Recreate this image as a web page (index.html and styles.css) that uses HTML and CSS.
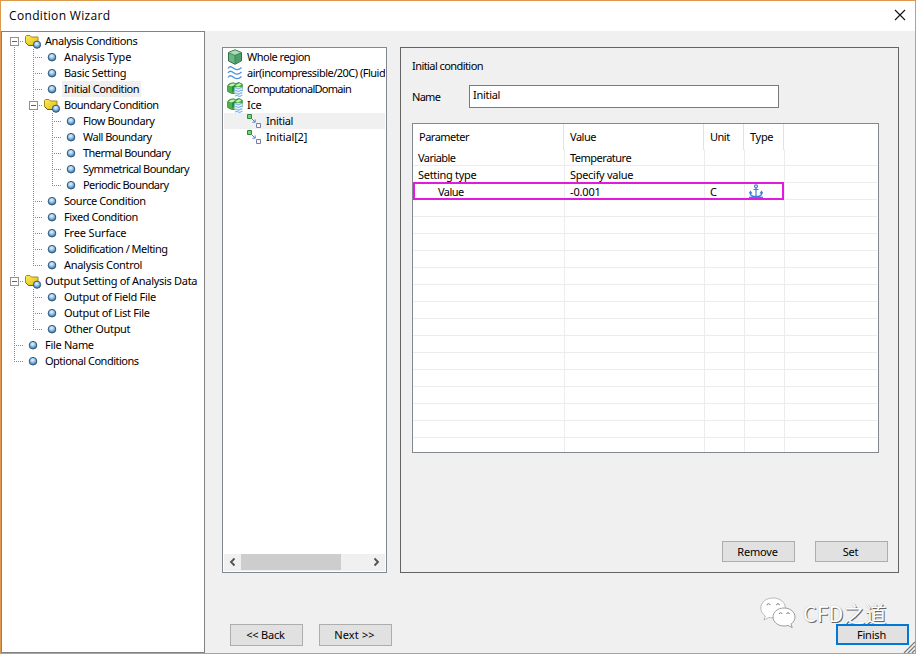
FILE: index.html
```html
<!DOCTYPE html>
<html lang="en">
<head>
<meta charset="utf-8">
<title>Condition Wizard</title>
<link rel="stylesheet" href="styles.css">
</head>
<body>
<svg class="defs" width="0" height="0" aria-hidden="true">
  <defs>
    <radialGradient id="ball" cx="45%" cy="35%" r="62%"><stop offset="0" stop-color="#e4f6ff"/><stop offset=".4" stop-color="#a3d0ee"/><stop offset="1" stop-color="#3a71a8"/></radialGradient>
    <linearGradient id="gold" x1="0" y1="0" x2="1" y2="1"><stop offset="0" stop-color="#fbec5a"/><stop offset="1" stop-color="#e3bd14"/></linearGradient>
    <symbol id="dot" viewBox="0 0 19 16"><circle cx="9" cy="8.200" r="3.800" fill="url(#ball)" stroke="#34567f" stroke-width="1"/></symbol>
    <symbol id="folder" viewBox="0 0 19 16"><path d="M1.500 3.500 2.500 2.500h3.500l1.500 1.500h6.500v8.500H4.500L1.500 9.500z" fill="url(#gold)" stroke="#a38820" stroke-width="1"/><path d="M1.500 9.500l3 3h6" stroke="#6c5a1c" fill="none"/><circle cx="13" cy="11.700" r="3.600" fill="url(#ball)" stroke="#34567f"/></symbol>
    <symbol id="cube" viewBox="0 0 16 16"><path d="M8 .8 14.500 3.500v8.300L8 15.300 1.500 12V3.500z" fill="#6cb585" stroke="#2f6f43"/><path d="M8 1.300 14 3.800 8 6.400 2 3.800z" fill="#a5deb4"/><path d="M8 6.400v8.300l6-3.200V3.800z" fill="#4f9d6a"/><path d="M2 3.900 8 6.400l6-2.500M8 6.400v8.400" fill="none" stroke="#2e7545" stroke-width=".7"/></symbol>
    <symbol id="waves" viewBox="0 0 16 16"><g fill="none" stroke="#4b93e2" stroke-width="1.300"><path d="M1 3.500c2-3 4-1.500 6 0s4.500 2 7.500-1M1 8c2-3 4-1.500 6 0s4.500 2 7.500-1M1 12.500c2-3 4-1.500 6 0s4.500 2 7.500-1"/></g></symbol>
    <symbol id="domain" viewBox="0 0 16 16"><path d="M.6 4.500 3 2.400 6.500 1.800l2 .8L12 1.500l3.300 1.700V10L11 12.500 5 12.500 .6 10.500z" fill="#4fb048" stroke="#2b8733" stroke-width=".8"/><path d="M1.600 4.600 4 2.900l3-.3 1 .8-2.500 2zM8.500 4.200l4-1.900 2 1.300-3.500 1.800z" fill="#c6f0ba"/><path d="M5 5.500 8 3.900v4L5 11.500z" fill="#2a8a38"/><path d="M7.500 6.200h8v9.300h-8z" fill="#eaf5ff"/><g fill="none" stroke="#5a9ce6" stroke-width="1"><path d="M7 7.800c2-2 2.700 0 4.300 0s2-1.500 4-1M7 10.400c2-2 2.700 0 4.300 0s2-1.500 4-1M7 13c2-2 2.700 0 4.300 0s2-1.500 4-1M8 15.300c2-2 2.700 0 4.300 0s1.500-.8 3-1"/></g></symbol>
    <symbol id="link" viewBox="0 0 16 16"><path d="M1.500 1.500h4v4h-4z" fill="#79d17b" stroke="#278b35"/><path d="M10.500 10.500h4v4h-4z" fill="#f4f6fb" stroke="#76819d"/><path d="m6 6 3 3M9.200 6.500v2.700H6.500" fill="none" stroke="#4c86d4"/></symbol>
  </defs>
</svg>

<div class="window">
  <header class="titlebar">
    <h1>Condition Wizard</h1>
    <svg class="close" viewBox="0 0 12 12"><path d="m1 1 10 10M11 1 1 11"/></svg>
  </header>

  <main class="content">
    <nav class="tree">
      <div class="node"><i class="g first box"></i><svg><use href="#folder"/></svg><span class="t k2">Analysis Conditions</span></div>
      <div class="node"><i class="g v"></i><i class="g v h"></i><svg><use href="#dot"/></svg><span class="t k0">Analysis Type</span></div>
      <div class="node"><i class="g v"></i><i class="g v h"></i><svg><use href="#dot"/></svg><span class="t">Basic Setting</span></div>
      <div class="node"><i class="g v"></i><i class="g v h"></i><svg><use href="#dot"/></svg><span class="t k2 current">Initial Condition</span></div>
      <div class="node"><i class="g v"></i><i class="g v h box"></i><svg><use href="#folder"/></svg><span class="t k3">Boundary Condition</span></div>
      <div class="node"><i class="g v"></i><i class="g v"></i><i class="g v h"></i><svg><use href="#dot"/></svg><span class="t k2">Flow Boundary</span></div>
      <div class="node"><i class="g v"></i><i class="g v"></i><i class="g v h"></i><svg><use href="#dot"/></svg><span class="t k3">Wall Boundary</span></div>
      <div class="node"><i class="g v"></i><i class="g v"></i><i class="g v h"></i><svg><use href="#dot"/></svg><span class="t k4">Thermal Boundary</span></div>
      <div class="node"><i class="g v"></i><i class="g v"></i><i class="g v h"></i><svg><use href="#dot"/></svg><span class="t k4">Symmetrical Boundary</span></div>
      <div class="node"><i class="g v"></i><i class="g v"></i><i class="g last h"></i><svg><use href="#dot"/></svg><span class="t k4">Periodic Boundary</span></div>
      <div class="node"><i class="g v"></i><i class="g v h"></i><svg><use href="#dot"/></svg><span class="t k2">Source Condition</span></div>
      <div class="node"><i class="g v"></i><i class="g v h"></i><svg><use href="#dot"/></svg><span class="t k2">Fixed Condition</span></div>
      <div class="node"><i class="g v"></i><i class="g v h"></i><svg><use href="#dot"/></svg><span class="t k0">Free Surface</span></div>
      <div class="node"><i class="g v"></i><i class="g v h"></i><svg><use href="#dot"/></svg><span class="t k3">Solidification / Melting</span></div>
      <div class="node"><i class="g v"></i><i class="g last h"></i><svg><use href="#dot"/></svg><span class="t">Analysis Control</span></div>
      <div class="node"><i class="g v h box"></i><svg><use href="#folder"/></svg><span class="t">Output Setting of Analysis Data</span></div>
      <div class="node"><i class="g v"></i><i class="g v h"></i><svg><use href="#dot"/></svg><span class="t">Output of Field File</span></div>
      <div class="node"><i class="g v"></i><i class="g v h"></i><svg><use href="#dot"/></svg><span class="t">Output of List File</span></div>
      <div class="node"><i class="g v"></i><i class="g last h"></i><svg><use href="#dot"/></svg><span class="t">Other Output</span></div>
      <div class="node"><i class="g v h"></i><svg><use href="#dot"/></svg><span class="t">File Name</span></div>
      <div class="node"><i class="g last h"></i><svg><use href="#dot"/></svg><span class="t k3">Optional Conditions</span></div>
    </nav>

    <div class="page">
      <div class="panels">
        <section class="regions">
          <div class="region-list">
            <div class="region"><svg><use href="#cube"/></svg><span class="k3">Whole region</span></div>
            <div class="region"><svg><use href="#waves"/></svg><span class="k3">air(incompressible/20C) (Fluid)</span></div>
            <div class="region"><svg><use href="#domain"/></svg><span class="k5">ComputationalDomain</span></div>
            <div class="region"><svg><use href="#domain"/></svg><span>Ice</span></div>
            <div class="region child selected"><svg><use href="#link"/></svg><span>Initial</span></div>
            <div class="region child"><svg><use href="#link"/></svg><span class="k0">Initial[2]</span></div>
          </div>
          <div class="scrollbar">
            <svg viewBox="0 0 17 16"><path d="M10.500 4.500 7 8l3.500 3.500"/></svg>
            <div class="track"><div class="thumb"></div></div>
            <svg viewBox="0 0 17 16"><path d="M6.500 4.500 10 8l-3.500 3.500"/></svg>
          </div>
        </section>

        <section class="settings">
          <h2 class="k4">Initial condition</h2>
          <div class="field"><label class="k5">Name</label><div class="input">Initial</div></div>
          <div class="grid">
            <div class="row head"><span class="k3">Parameter</span><span class="k3">Value</span><span class="k3">Unit</span><span>Type</span></div>
            <div class="row"><span class="k4">Variable</span><span class="k3">Temperature</span><span></span><span></span></div>
            <div class="row"><span>Setting type</span><span>Specify value</span><span></span><span></span></div>
            <div class="row marked"><span class="sub k4">Value</span><span class="k0">-0.001</span><span>C</span><span><svg class="anchor" viewBox="0 0 14 14"><circle cx="7" cy="2.300" r="1.500"/><path d="M7 4v9M4.500 5.500h5M1.500 7.500v3.200c1 1.500 3 2 5.500 2s4.500-.5 5.500-2V7.500M.3 9.500l1.200-2 1.500 2M11 9.500l1.500-2 1.200 2M0 13.400h14"/></svg></span></div>
            <div class="row"><span></span><span></span><span></span><span></span></div>
            <div class="row"><span></span><span></span><span></span><span></span></div>
            <div class="row"><span></span><span></span><span></span><span></span></div>
            <div class="row"><span></span><span></span><span></span><span></span></div>
            <div class="row"><span></span><span></span><span></span><span></span></div>
            <div class="row"><span></span><span></span><span></span><span></span></div>
            <div class="row"><span></span><span></span><span></span><span></span></div>
            <div class="row"><span></span><span></span><span></span><span></span></div>
            <div class="row"><span></span><span></span><span></span><span></span></div>
            <div class="row"><span></span><span></span><span></span><span></span></div>
            <div class="row"><span></span><span></span><span></span><span></span></div>
            <div class="row"><span></span><span></span><span></span><span></span></div>
            <div class="row"><span></span><span></span><span></span><span></span></div>
            <div class="row"><span></span><span></span><span></span><span></span></div>
            <div class="row rest"><span></span><span></span><span></span><span></span></div>
          </div>
          <div class="actions"><button>Remove</button><button>Set</button></div>
        </section>
      </div>
      <footer class="nav"><button>&lt;&lt; Back</button><button class="next">Next &gt;&gt;</button><button class="finish">Finish</button></footer>
    </div>
  </main>

  <div class="watermark">
    <svg viewBox="0 0 36 32"><g fill="#fff" stroke="#a0a0a0" stroke-width=".7"><path d="M13 1C6 1 .8 5.300.8 11c0 3.300 1.700 6 4.500 7.900L4 23l4.800-2.600c1.400.3 2.800.5 4.200.5 7 0 12.300-4.400 12.300-10S20 1 13 1z"/><path d="M24 11c6.300 0 11 4 11 9 0 2.900-1.500 5.200-3.900 6.900l1.100 3.700-4.200-2.200c-1.300.4-2.600.6-4 .6-6.200 0-11-4-11-9s4.800-9 11-9z" stroke="#777"/></g><g fill="none" stroke="#777" stroke-width=".9"><path d="M7 8.200a1.500 1.500 0 0 1 3 0M16.500 8.200a1.500 1.500 0 0 1 3 0M19.300 17a1.300 1.300 0 0 1 2.600 0M26.800 17a1.300 1.300 0 0 1 2.600 0"/></g></svg>
    <span>CFD之道</span>
  </div>
  <svg class="grip" viewBox="0 0 12 12"><path d="M1 12 12 1M5 12l7-7M9 12l3-3"/></svg>
</div>
</body>
</html>
```
FILE: styles.css
```css
*, *::before, *::after { box-sizing: border-box; }
body {
  margin: 0;
  font: 11px/16px "Noto Sans", "Noto Sans CJK SC", sans-serif;
  letter-spacing: -0.3px;
  color: #000;
}
/* tracking steps, loose to tight */
.k0 { letter-spacing: -0.15px; }
.k2 { letter-spacing: -0.42px; }
.k3 { letter-spacing: -0.5px; }
.k4 { letter-spacing: -0.57px; }
.k5 { letter-spacing: -0.72px; }

.defs { position: absolute; }
.window {
  position: relative;
  display: flex;
  flex-direction: column;
  width: 916px;
  height: 654px;
  border: 1px solid #dc9a4c;
  background: #f0f0f0;
}
.titlebar {
  display: flex;
  justify-content: space-between;
  align-items: center;
  height: 30px;
  padding: 0 9px 0 8px;
  background: #fff;
}
h1 { margin: 0; font: 12px/16px "Open Sans", sans-serif; letter-spacing: 0.33px; }
.close { width: 12px; height: 12px; margin-top: -2px; fill: none; stroke: #111; stroke-width: 1.1; }
.content { display: flex; flex: 1; min-height: 0; }

.tree {
  width: 204px;
  padding: 1px 0 0 3px;
  border: 1px solid #828282;
  background: #fff;
}
.node { display: flex; height: 16px; white-space: nowrap; }
.node svg { flex: none; width: 19px; height: 16px; }
.t { padding: 0 2px; }
.current { background: #efefef; }
.g { position: relative; flex: none; width: 19px; height: 16px; }
.g::before {
  content: "";
  position: absolute;
  left: 9px;
  top: 0;
  width: 1px;
  height: 16px;
}
.v::before, .last::before, .first::before {
  background: repeating-linear-gradient(#888 0 1px, transparent 1px 2px);
}
.last::before { height: 8px; }
.first::before { top: 8px; height: 8px; }
.h, .first {
  background: repeating-linear-gradient(90deg, #888 0 1px, transparent 1px 2px) 9px 8px / 11px 1px no-repeat;
}
.box::after {
  content: "";
  position: absolute;
  left: 5px;
  top: 4px;
  width: 9px;
  height: 9px;
  border: 1px solid #919191;
  background: linear-gradient(#4b63a7, #4b63a7) center / 5px 1px no-repeat #fff;
}

.page { display: flex; flex: 1; flex-direction: column; padding: 16px 6px 0 17px; }
.panels { display: flex; gap: 13px; }
.regions {
  display: flex;
  flex-direction: column;
  width: 165px;
  height: 526px;
  padding: 1px;
  border: 1px solid #828790;
  background: #fff;
}
.region-list { flex: 1; overflow: hidden; }
.region { display: flex; gap: 4px; height: 16px; padding-left: 3px; white-space: nowrap; }
.region svg { flex: none; width: 16px; height: 16px; }
.child { padding-left: 22px; }
.selected { background: #f0f0f0; }
.scrollbar { display: flex; height: 17px; background: #f0f0f0; }
.scrollbar svg { width: 17px; height: 16px; fill: none; stroke: #505050; stroke-width: 1.8; }
.track { flex: 1; }
.thumb { width: 100px; height: 16px; background: #cdcdcd; }

.settings {
  display: flex;
  flex-direction: column;
  width: 499px;
  height: 526px;
  padding: 10px 10px 10px 11px;
  border: 1px solid #646464;
}
h2 { margin: 0; font: inherit; }
.field { display: flex; align-items: center; height: 23px; margin-top: 11px; }
.field label { width: 57px; }
.input { width: 310px; height: 23px; padding: 1px 3px; border: 1px solid #7a7a7a; background: #fff; }
.grid {
  width: 467px;
  height: 330px;
  margin-top: 15px;
  border: 1px solid #828790;
  background: #fff;
  overflow: hidden;
}
.row {
  display: grid;
  grid-template-columns: 152px 140px 40px 40px;
  height: 17px;
  margin-right: 1px;
  border-bottom: 1px solid #ececec;
  line-height: 17px;
}
.row span { padding-left: 5px; border-right: 1px solid #ececec; }
.row .sub { padding-left: 25px; }
.head { grid-template-columns: 151px 140px 40px 40px; height: 25px; border-bottom: 0; line-height: 26px; }
.head span { padding-left: 6px; border-color: #e2e2e2; }
.marked { position: relative; }
.marked::after {
  content: "";
  position: absolute;
  left: 0;
  top: -1px;
  width: 371px;
  height: 18px;
  border: 2px solid #e01adf;
}
.row .anchor { display: block; width: 14px; height: 14px; margin: 1px 0 0 -1px; fill: none; stroke: #3f7de0; stroke-width: 1.2; }
.rest { border: 0; }
.actions { display: flex; gap: 20px; justify-content: flex-end; margin-top: auto; }
button {
  width: 73px;
  height: 21px;
  padding: 0 2px 0 0;
  border: 1px solid #adadad;
  background: #e1e1e1;
  color: #000;
  font: inherit;
  letter-spacing: -0.2px;
}
.nav { display: flex; gap: 16px; padding: 51px 0 0 8px; }
.nav button { height: 22px; }
.nav .next { letter-spacing: 0.15px; }
.nav .finish { height: 21px; margin-left: auto; border: 2px solid #0078d7; }

.watermark {
  position: absolute;
  left: 759px;
  top: 596px;
  display: flex;
  gap: 7px;
  align-items: center;
  pointer-events: none;
}
.watermark svg { width: 36px; height: 32px; }
.watermark span {
  height: 32px;
  font: 21.500px/32px "Noto Sans CJK SC", sans-serif;
  letter-spacing: 0;
  color: #fff;
  text-shadow: 1px 1px 0 #666, 0 0 1px #aaa;
}
.nav .finish { position: relative; z-index: 1; }
.grip { position: absolute; right: 0; bottom: 0; width: 12px; height: 12px; stroke: #777; stroke-width: 1.2; }
```
